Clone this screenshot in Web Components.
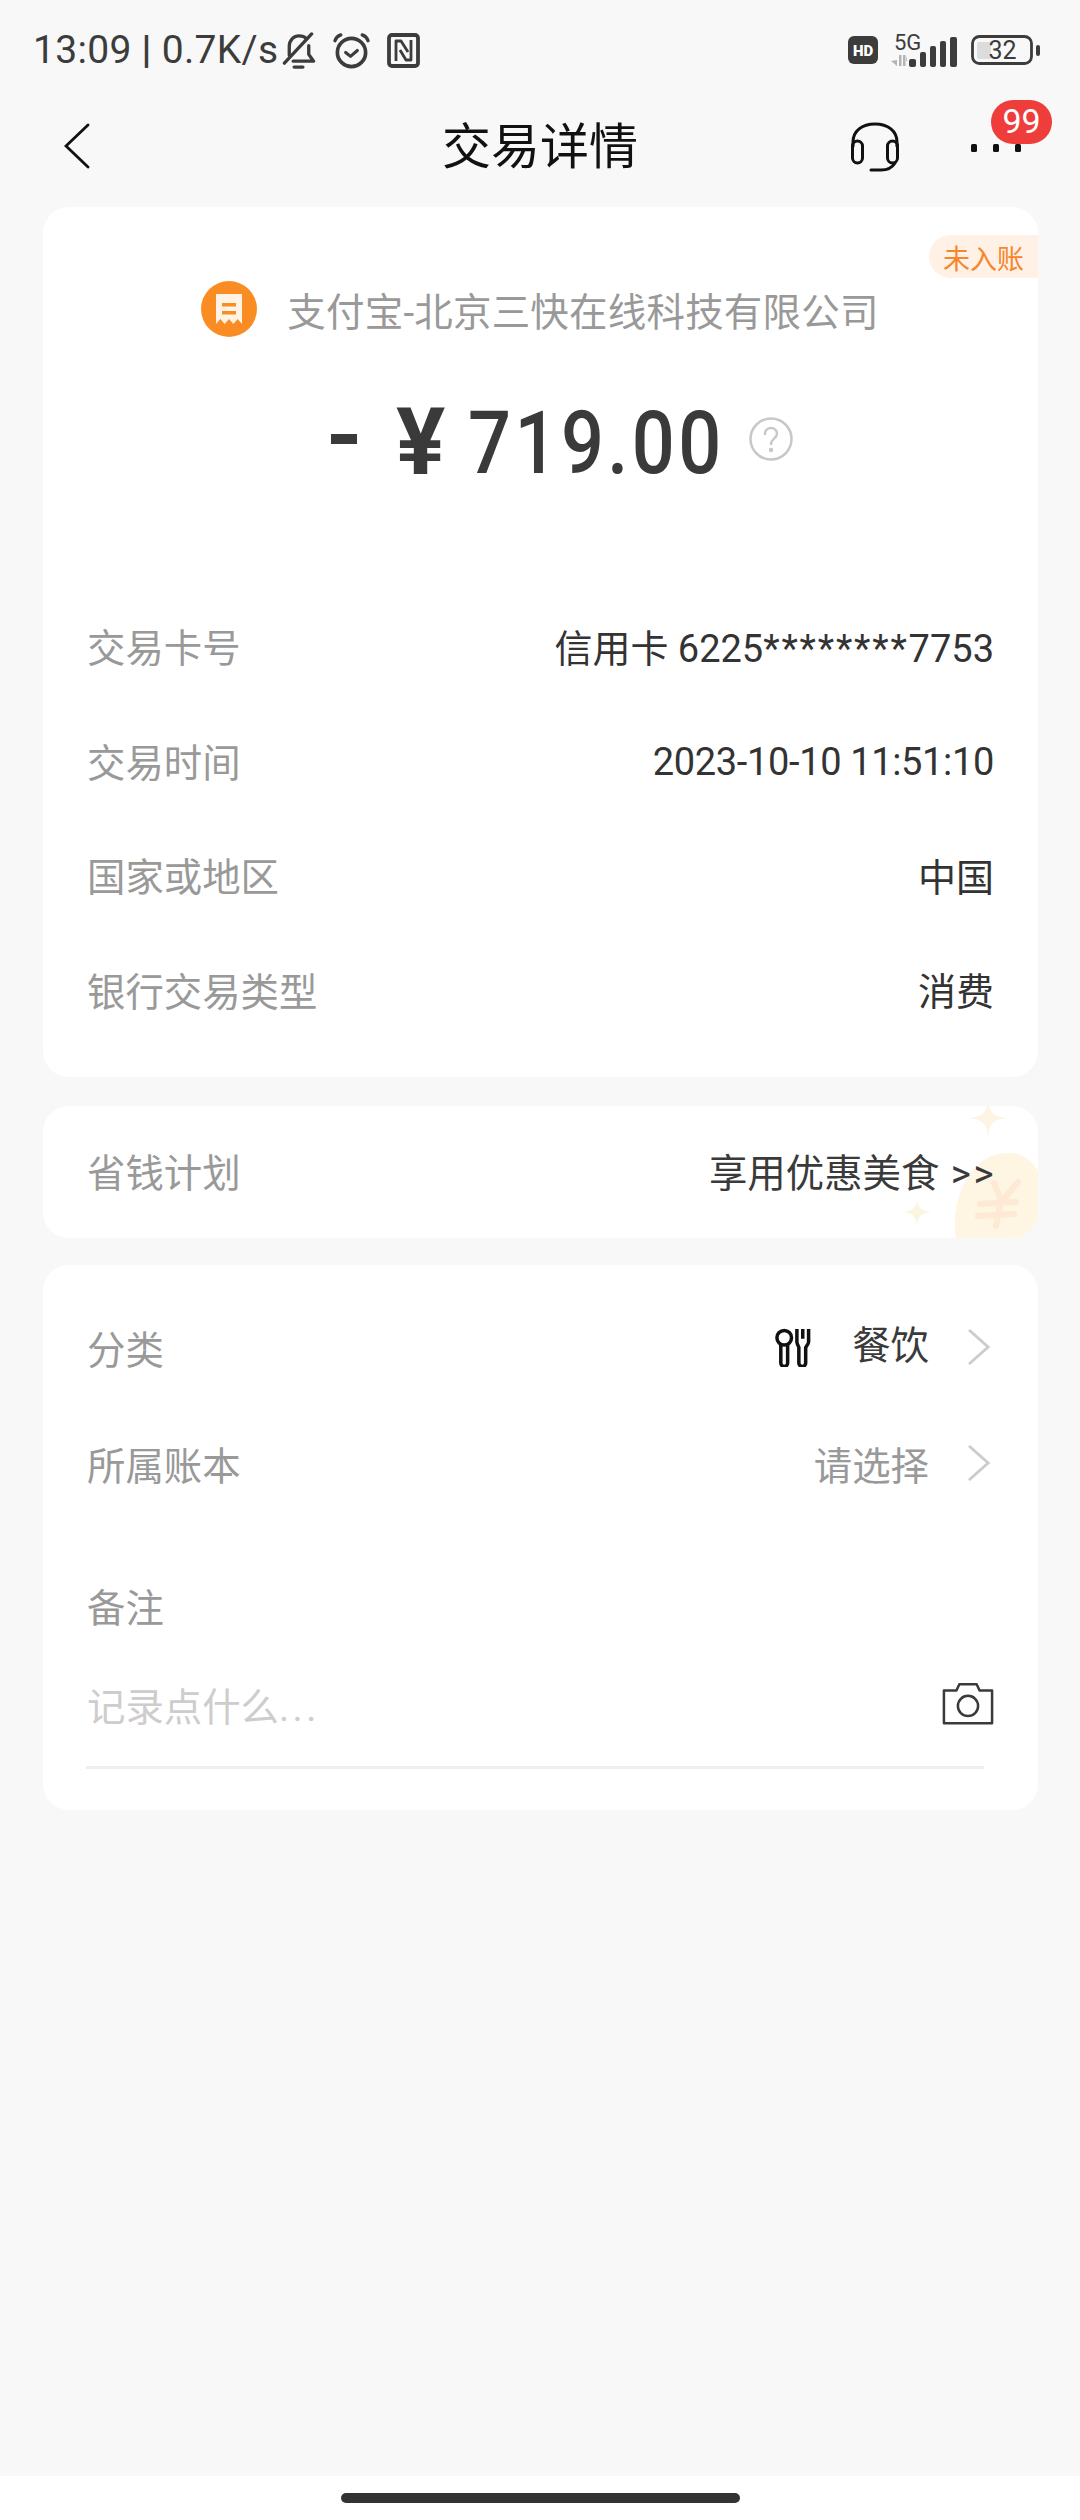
<!DOCTYPE html>
<html>
<head>
<meta charset="utf-8">
<style>
  html, body { margin: 0; padding: 0; background: #f8f8f8; }
  body { display: flex; flex-direction: column; width: 1080px; height: 2520px; overflow: hidden; font-family: Roboto, "Noto Sans CJK SC", sans-serif; }
  detail-page { flex: 1; }
</style>
</head>
<body>
<detail-page>
  <status-bar></status-bar>
  <title-bar></title-bar>
  <info-card></info-card>
  <saving-card></saving-card>
  <note-card></note-card>
</detail-page>
<home-bar></home-bar>

<script>
const FONT = 'Roboto, "Noto Sans CJK SC", sans-serif';

class DetailPage extends HTMLElement {
  connectedCallback() {
    this.attachShadow({ mode: 'open' });
    this.shadowRoot.innerHTML = `
      <style>
        :host { display: block; font-family: ${FONT}; }
      </style>
      <slot></slot>`;
  }
}

class StatusBar extends HTMLElement {
  connectedCallback() {
    this.attachShadow({ mode: 'open' });
    this.shadowRoot.innerHTML = `
      <style>
        :host { display: flex; align-items: center; justify-content: space-between; height: 100px; padding: 0 40px 0 33px; box-sizing: border-box; color: #3c3c3c; }
        .left, .right { display: flex; align-items: center; }
        .time { font-size: 39px; letter-spacing: .3px; white-space: pre; }
        .time b { font-weight: 700; }
        svg { display: block; }
        .bell { margin-left: 3px; }
        .alarm { margin-left: 15px; }
        .nfc { margin-left: 15px; }
        .net { margin: 0 0 6px 12px; }
        .batt { margin-left: 14px; }
      </style>
      <div class="left">
        <span class="time">13:09 <b>|</b> 0.7K/s</span>
        <svg class="bell" width="36" height="37" viewBox="0 0 36 38" fill="none" stroke="#3c3c3c" stroke-width="3.4" stroke-linecap="round" stroke-linejoin="round">
          <path d="M8 24V15C8 8 13 4 18 4c3 0 6 1 8 3"/>
          <path d="M28 14v9l5 7H12"/>
          <path d="M31 2 3 32"/>
          <path d="M13 36h9"/>
        </svg>
        <svg class="alarm" width="39" height="37" viewBox="0 0 38 38" fill="none" stroke="#3c3c3c" stroke-linecap="round" stroke-linejoin="round">
          <circle cx="19" cy="21" r="14.5" stroke-width="3.8"/>
          <path d="M13 21l5 4 7-6" stroke-width="3.2"/>
          <path d="M2 9c1-3 3-5 6-6M36 9c-1-3-3-5-6-6" stroke-width="3.4"/>
        </svg>
        <svg class="nfc" width="35" height="35" viewBox="0 0 33 35" fill="none" stroke="#3c3c3c" stroke-linejoin="round">
          <rect x="2" y="2" width="29" height="31" rx="3" stroke-width="3.8"/>
          <path d="M9 28V8h5l7 11" stroke-width="2.8"/>
          <path d="M24 7v20h-5l-6-10" stroke-width="2.8"/>
        </svg>
      </div>
      <div class="right">
        <svg width="30" height="28" viewBox="0 0 30 28">
          <rect width="30" height="28" rx="6" fill="#3c3c3c"/>
          <text x="15" y="19.5" font-family="Roboto, sans-serif" font-size="15" font-weight="900" fill="#fff" text-anchor="middle">HD</text>
        </svg>
        <svg class="net" width="67" height="40" viewBox="0 -6 67 40">
          <text x="4" y="17" font-family="Roboto, sans-serif" font-size="22" fill="#3c3c3c">5G</text>
          <path d="M7 33v-6l-6 1zM9 33V22h2.500v11zM13 33V22h2.500v11zM17 22v6l-1 0z" fill="#b4b4b4"/>
          <rect x="19" y="26" width="7" height="8" rx="2" fill="#3c3c3c"/>
          <rect x="30" y="19" width="6" height="15" rx="2" fill="#3c3c3c"/>
          <rect x="40" y="13" width="6" height="21" rx="2" fill="#3c3c3c"/>
          <rect x="50" y="8" width="6" height="26" rx="2" fill="#3c3c3c"/>
          <rect x="60" y="4" width="7" height="30" rx="2" fill="#3c3c3c"/>
        </svg>
        <svg class="batt" width="69" height="34" viewBox="0 -2 69 34">
          <rect x="1.500" y="1.500" width="59" height="27" rx="7" fill="none" stroke="#3c3c3c" stroke-width="2.800"/>
          <rect x="6" y="7" width="14" height="17" rx="2" fill="#dcdcdc"/>
          <text x="31.500" y="24" font-family="Roboto, sans-serif" font-size="25" fill="#3c3c3c" text-anchor="middle">32</text>
          <rect x="65" y="10" width="4" height="11" rx="2" fill="#3c3c3c"/>
        </svg>
      </div>`;
  }
}

class TitleBar extends HTMLElement {
  connectedCallback() {
    this.attachShadow({ mode: 'open' });
    this.shadowRoot.innerHTML = `
      <style>
        :host { display: block; position: relative; height: 107px; }
        .row { display: flex; align-items: center; justify-content: center; height: 95px; position: relative; }
        h1 { margin: 0; font-size: 49px; font-weight: 400; color: #111; line-height: 95px; }
        .back { position: absolute; left: 64px; top: 23px; }
        .head { position: absolute; left: 850px; top: 22px; }
        .dots { position: absolute; left: 971px; top: 44px; display: flex; gap: 16px; }
        .dots i { width: 6px; height: 8px; border-radius: 1.5px; background: #111; }
        .badge { position: absolute; left: 991px; top: 0; width: 61px; height: 44px; border-radius: 22px; background: #ee3d3b; color: #fff; font-size: 34px; line-height: 43px; text-align: center; }
      </style>
      <div class="row">
        <svg class="back" width="26" height="46" viewBox="0 0 26 46" fill="none" stroke="#111" stroke-width="2.800" stroke-linecap="round"><path d="M24 2 2 23l22 21"/></svg>
        <h1>交易详情</h1>
        <svg class="head" width="50" height="50" viewBox="0 0 50 50" fill="none" stroke="#111" stroke-width="3">
          <path d="M3 25v-5C3 9 12 2 25 2s22 7 22 18v5"/>
          <rect x="2.500" y="19" width="10" height="22" rx="5"/>
          <rect x="37.500" y="19" width="10" height="22" rx="5"/>
          <path d="M45 41c-3 5-8 7-14 7h-10" stroke-linecap="round"/>
        </svg>
        <div class="dots"><i></i><i></i><i></i></div>
        <div class="badge">99</div>
      </div>`;
  }
}

class InfoRow extends HTMLElement {
  connectedCallback() {
    this.attachShadow({ mode: 'open' });
    this.shadowRoot.innerHTML = `
      <style>
        :host { display: flex; align-items: center; justify-content: space-between; height: 114.500px; font-size: 38.400px; color: #999; }
        .val { color: #333; white-space: pre; font-size: 38px; }
      </style>
      <slot name="label"></slot>
      <span class="val"><slot></slot></span>`;
  }
}

class InfoCard extends HTMLElement {
  connectedCallback() {
    this.attachShadow({ mode: 'open' });
    this.shadowRoot.innerHTML = `
      <style>
        :host { display: block; position: relative; margin: 0 42px 0 43px; height: 870px; background: #fff; border-radius: 26px; overflow: hidden; box-sizing: border-box; padding-top: 74px; }
        .pill { position: absolute; top: 28px; right: 0; width: 109px; height: 43px; border-radius: 22px 0 0 22px; background: #fff1e6; color: #f5862b; font-size: 27px; line-height: 50px; padding-left: 14px; box-sizing: border-box; }
        .merchant { display: flex; align-items: center; justify-content: center; gap: 30px; height: 56px; color: #999; font-size: 38.500px; padding-right: 1px; letter-spacing: .2px; }
        .merchant svg { display: block; }
        .amount { display: flex; align-items: center; margin-top: 58px; height: 96px; padding-left: 288px; color: #3a3a3a; }
        .minus { width: 26px; height: 10px; background: #3a3a3a; margin: 0 39px 9px 0; }
        .yen { width: 49px; font: 700 92px/96px Roboto, sans-serif; text-align: center; margin-right: 23px; }
        .num { width: 250px; white-space: nowrap; font: 500 88px/96px Roboto, sans-serif; letter-spacing: 4px; transform: scaleX(.86); transform-origin: left center; }
        .q { margin: 0 0 8px 31px; }
        .rows { margin-top: 97px; padding: 0 44px; }
        .stars { letter-spacing: 1.800px; }
        .date { display: inline-block; margin-top: 5px; letter-spacing: -.35px; }
      </style>
      <div class="pill">未入账</div>
      <div class="merchant">
        <svg width="56" height="56" viewBox="0 0 56 56">
          <circle cx="28" cy="28" r="28" fill="#f98d24"/>
          <path d="M15 13h26v30l-4.300-5-4.300 5-4.400-5-4.300 5-4.400-5-4.300 5z" fill="#fff3e6"/>
          <rect x="21" y="22" width="14" height="3.500" fill="#f98d24"/>
          <rect x="21" y="30" width="14" height="3.500" fill="#f98d24"/>
        </svg>
        <span>支付宝-北京三快在线科技有限公司</span>
      </div>
      <div class="amount">
        <span class="minus"></span>
        <span class="yen">¥</span>
        <span class="num">719.00</span>
        <svg class="q" width="44" height="44" viewBox="0 0 44 44" fill="none" stroke="#c8c8c8" stroke-width="2.500">
          <circle cx="22" cy="22" r="20.500"/>
          <path d="M16 17c0-4 3-6 6-6s6 2 6 6c0 4-6 5-6 10" stroke-linecap="round"/>
          <circle cx="22" cy="33" r="1" fill="#c8c8c8"/>
        </svg>
      </div>
      <div class="rows">
        <info-row><span slot="label">交易卡号</span>信用卡 6225<span class="stars">********</span>7753</info-row>
        <info-row><span slot="label">交易时间</span><span class="date">2023-10-10 11:51:10</span></info-row>
        <info-row><span slot="label">国家或地区</span>中国</info-row>
        <info-row><span slot="label">银行交易类型</span>消费</info-row>
      </div>`;
  }
}

class SavingCard extends HTMLElement {
  connectedCallback() {
    this.attachShadow({ mode: 'open' });
    this.shadowRoot.innerHTML = `
      <style>
        :host { display: flex; position: relative; align-items: center; justify-content: space-between; margin: 29px 42px 0 43px; height: 132px; padding: 0 44px 5px; box-sizing: border-box; background: #fff; border-radius: 26px; overflow: hidden; font-size: 38.400px; color: #999; }
        .val { position: relative; flex: none; white-space: nowrap; color: #3a3a3a; }
        .gt { letter-spacing: 2.500px; margin: 0 -2px 0 2px; }
        svg { position: absolute; right: 0; top: 0; }
      </style>
      <svg width="140" height="132" viewBox="0 0 140 132">
        <path d="M90-8c1 14 4 19 20 20-16 2-19 6-20 20-1-14-4-18-20-20 16-1 19-6 20-20z" fill="#fdf5e3"/>
        <path d="M19 92c1 10 4 13 15 14-11 1-14 4-15 14-1-10-4-13-15-14 11-1 14-4 15-14z" fill="#fdf5e3"/>
        <path d="M58 132C52 100 68 47 110 47c15 0 25 8 31 20v65z" fill="#fef5e3"/>
        <path d="M96 77l7 17M120 76l-15 18M103 94l-5 26M82 98l36-2M80 110l36-2" fill="none" stroke="#fde9d4" stroke-width="6" stroke-linecap="round"/>
      </svg>
      <span>省钱计划</span>
      <span class="val">享用优惠美食 <span class="gt">&gt;&gt;</span></span>`;
  }
}

class NoteCard extends HTMLElement {
  connectedCallback() {
    this.attachShadow({ mode: 'open' });
    this.shadowRoot.innerHTML = `
      <style>
        :host { display: block; margin: 27px 42px 0 43px; height: 545px; padding: 24px 44px 0; box-sizing: border-box; background: #fff; border-radius: 26px; font-size: 38.400px; color: #999; }
        .row { display: flex; align-items: center; justify-content: space-between; height: 116px; }
        .right { display: flex; align-items: center; }
        .chev { margin-left: 39px; margin-right: 4px; display: block; }
        .food { margin-right: 41px; display: block; }
        .dark { color: #3a3a3a; margin-bottom: 10px; }
        .note { margin-top: 60px; height: 56px; line-height: 56px; }
        .input { display: flex; align-items: center; justify-content: space-between; margin-top: 36px; height: 62px; color: #cdcdcd; }
        .dots { letter-spacing: 3.500px; }
        .line { height: 3px; width: 898px; margin: 31px 0 0 -1px; background: #eee; }
      </style>
      <div class="row">
        <span>分类</span>
        <span class="right">
          <svg class="food" width="36" height="39" viewBox="0 0 36 40" fill="none" stroke="#111" stroke-width="3.600">
            <circle cx="9" cy="10" r="7.500"/>
            <path d="M5.500 17v19a3.500 3.500 0 0 0 7 0V17"/>
            <path d="M22 1v13c0 3 2 5 2 6v16a3.500 3.500 0 0 0 7 0V20c0-1 3-3 3-6V1M28 1v10"/>
          </svg>
          <span class="dark">餐饮</span>
          <svg class="chev" width="22" height="38" viewBox="0 0 23 38" fill="none" stroke="#ccc" stroke-width="3" stroke-linecap="round"><path d="M2 2l19 17L2 36"/></svg>
        </span>
      </div>
      <div class="row">
        <span>所属账本</span>
        <span class="right">
          <span>请选择</span>
          <svg class="chev" width="22" height="38" viewBox="0 0 23 38" fill="none" stroke="#ccc" stroke-width="3" stroke-linecap="round"><path d="M2 2l19 17L2 36"/></svg>
        </span>
      </div>
      <div class="note">备注</div>
      <div class="input">
        <span>记录点什么<span class="dots">...</span></span>
        <svg width="52" height="44" viewBox="0 0 54 44" fill="none" stroke="#3a3a3a" stroke-width="2.600" stroke-linejoin="round">
          <path d="M2 8h13l3-6.500h18L39 8h13v34H2z"/>
          <circle cx="27" cy="24" r="10.500"/>
        </svg>
      </div>
      <div class="line"></div>`;
  }
}

class HomeBar extends HTMLElement {
  connectedCallback() {
    this.attachShadow({ mode: 'open' });
    this.shadowRoot.innerHTML = `
      <style>
        :host { display: flex; justify-content: center; flex: 0 0 44px; padding-top: 17px; box-sizing: border-box; background: #fff; }
        .bar { width: 399px; height: 10px; border-radius: 5px; background: #333; }
      </style>
      <div class="bar"></div>`;
  }
}

customElements.define('detail-page', DetailPage);
customElements.define('status-bar', StatusBar);
customElements.define('title-bar', TitleBar);
customElements.define('info-row', InfoRow);
customElements.define('info-card', InfoCard);
customElements.define('saving-card', SavingCard);
customElements.define('note-card', NoteCard);
customElements.define('home-bar', HomeBar);
</script>
</body>
</html>
